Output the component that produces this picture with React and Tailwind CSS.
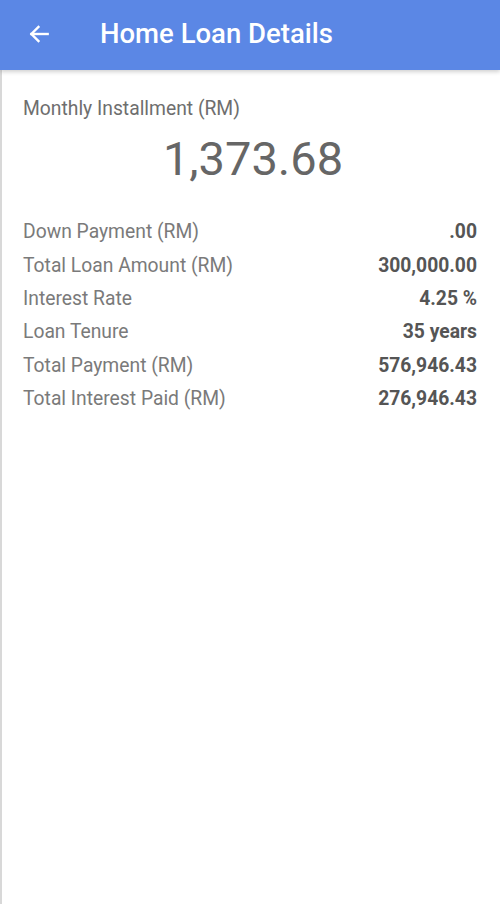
import React from "react";

const rows = [
  ["Down Payment (RM)", ".00"],
  ["Total Loan Amount (RM)", "300,000.00"],
  ["Interest Rate", "4.25 %"],
  ["Loan Tenure", "35 years"],
  ["Total Payment (RM)", "576,946.43"],
  ["Total Interest Paid (RM)", "276,946.43"],
];

export default function App() {
  return (
    <div className="w-[500px] h-[904px] bg-white flex flex-col overflow-hidden" style={{ fontFamily: "Roboto, 'Noto Sans', sans-serif" }}>
      <div className="h-[70px] shrink-0 bg-[#5b87e5] flex items-center pb-[3px] shadow-[0_2px_4px_rgba(0,0,0,0.18)] relative z-10">
        <div className="w-[100px] pl-[26px] flex items-center">
          <svg width="26" height="26" viewBox="0 0 24 24" fill="none" stroke="white" strokeWidth="2.2" strokeLinecap="square">
            <path d="M20 12H5" />
            <path d="M11.5 5.5L5 12l6.5 6.5" />
          </svg>
        </div>
        <div className="text-white text-[27.5px] font-medium leading-none">Home Loan Details</div>
      </div>
      <div className="flex-1 border-l-2 border-[#d8d8d8] flex flex-col pl-[21px] pr-[23px] pt-[27px]">
        <div className="text-[19.3px] text-[#6e6e6e] leading-[24px]">Monthly Installment (RM)</div>
        <div className="text-[47px] text-[#666] leading-none text-center mt-[14px] pl-[6px]">1,373.68</div>
        <div className="flex flex-col mt-[34px]">
          {rows.map(([k, v]) => (
            <div key={k} className="flex justify-between items-center h-[33.4px] text-[19.3px]">
              <span className="text-[#7a7a7a]">{k}</span>
              <span className="text-[#555] font-bold">{v}</span>
            </div>
          ))}
        </div>
      </div>
    </div>
  );
}
